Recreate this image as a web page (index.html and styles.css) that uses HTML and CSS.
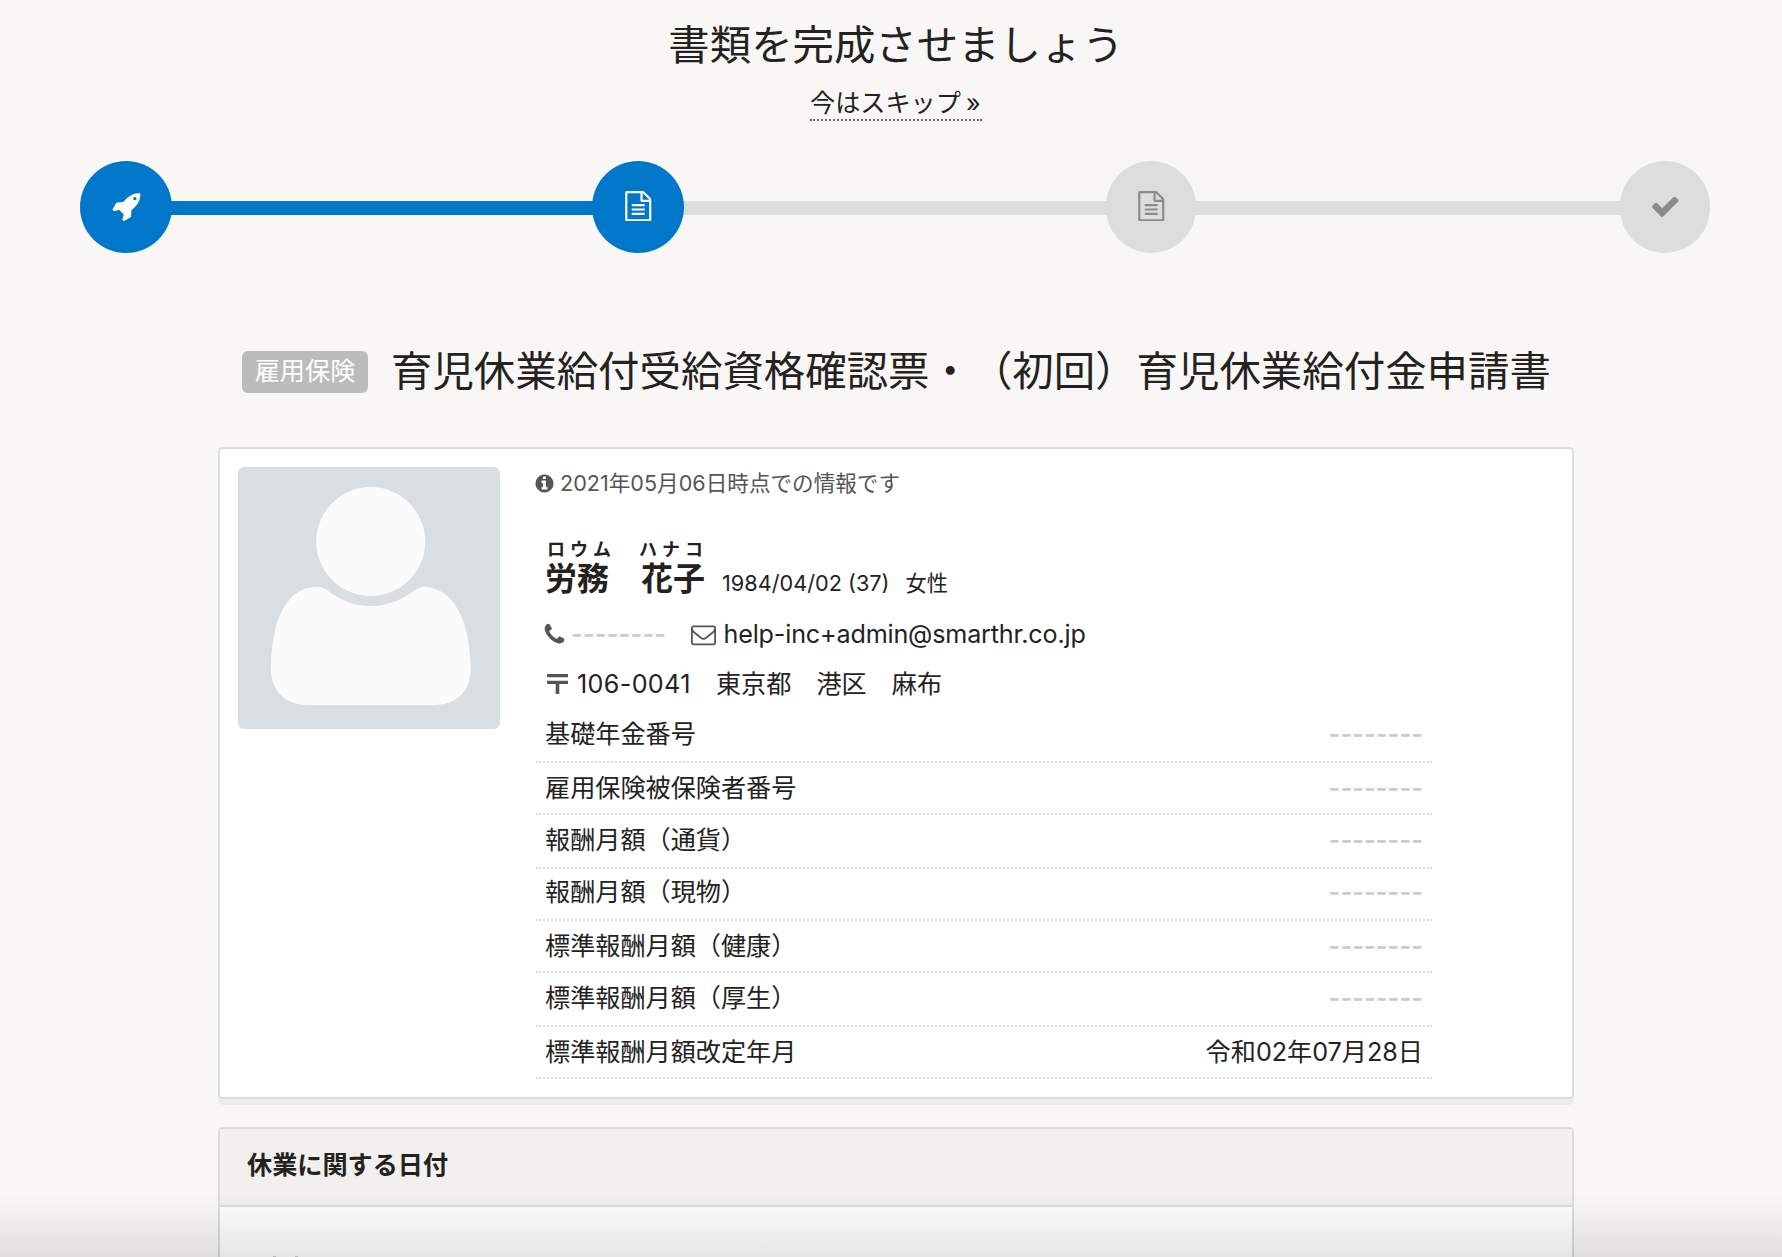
FILE: index.html
```html
<!DOCTYPE html>
<html lang="ja">
<head>
<meta charset="utf-8">
<title>書類を完成させましょう</title>
<link rel="stylesheet" href="styles.css">
</head>
<body>
<svg class="sprite" aria-hidden="true">
<symbol id="file" viewBox="0 0 1792 1792"><path d="M1596 380q28 28 48 76t20 88v1152q0 40-28 68t-68 28h-1344q-40 0-68-28t-28-68v-1600q0-40 28-68t68-28h896q40 0 88 20t76 48zm-444-244v376h376q-10-29-22-41l-313-313q-12-12-41-22zm384 1528v-1024h-416q-40 0-68-28t-28-68v-416h-768v1536h1280zm-1024-864q0-14 9-23t23-9h704q14 0 23 9t9 23v64q0 14-9 23t-23 9h-704q-14 0-23-9t-9-23v-64zm736 224q14 0 23 9t9 23v64q0 14-9 23t-23 9h-704q-14 0-23-9t-9-23v-64q0-14 9-23t23-9h704zm0 256q14 0 23 9t9 23v64q0 14-9 23t-23 9h-704q-14 0-23-9t-9-23v-64q0-14 9-23t23-9h704z"/></symbol>
</svg>
<header class="top">
  <h1 class="title">書類を完成させましょう</h1>
  <a class="skip">今はスキップ <span class="raquo">»</span></a>
</header>
<div class="steps">
  <div class="step done"><svg class="rocket" viewBox="0 0 1792 1792"><path d="M1440 448q0-40-28-68t-68-28-68 28-28 68 28 68 68 28 68-28 28-68zm224-288q0 249-75.5 430.5t-253.5 360.5q-81 80-195 176l-20 379q-2 16-16 26l-384 224q-7 4-16 4-12 0-23-9l-64-64q-13-14-8-32l85-276-281-281-276 85q-3 1-9 1-14 0-23-9l-64-64q-17-19-5-39l224-384q10-14 26-16l379-20q96-114 176-195 188-187 358-258t431-71q14 0 24 9.5t10 22.5z"/></svg></div>
  <div class="bar done"></div>
  <div class="step done"><svg><use href="#file"/></svg></div>
  <div class="bar"></div>
  <div class="step"><svg><use href="#file"/></svg></div>
  <div class="bar last"></div>
  <div class="step"><svg viewBox="0 0 1792 1792"><path d="M1671 566q0 40-28 68l-724 724-136 136q-28 28-68 28t-68-28l-136-136-362-362q-28-28-28-68t28-68l136-136q28-28 68-28t68 28l294 295 656-657q28-28 68-28t68 28l136 136q28 28 28 68z"/></svg></div>
</div>
<div class="heading">
  <span class="badge">雇用保険</span>
  <h2 class="title">育児休業給付受給資格確認票・（初回）育児休業給付金申請書</h2>
</div>
<section class="card profile">
  <svg class="avatar" viewBox="0 0 262 262"><rect width="262" height="262" fill="#d9dee0"/><g fill="#fafbfb"><circle cx="132.7" cy="74.5" r="54.5"/><path d="M33 203C33 150 50 120 79 119.7Q84 119.500 88 122.500C102 133 115 139 132.700 139C150 139 164 133 178 122.500Q182 119.500 187 119.700C215 121 232.700 153 232.700 203C232.700 224 218 238 197 238H69C48 238 33 224 33 203Z"/></g></svg>
  <div class="info">
    <p class="asof"><svg viewBox="0 0 1792 1792"><path d="M1152 1376v-160q0-14-9-23t-23-9h-96v-512q0-14-9-23t-23-9h-320q-14 0-23 9t-9 23v160q0 14 9 23t23 9h96v320h-96q-14 0-23 9t-9 23v160q0 14 9 23t23 9h448q14 0 23-9t9-23zm-128-896v-160q0-14-9-23t-23-9h-192q-14 0-23 9t-9 23v160q0 14 9 23t23 9h192q14 0 23-9t9-23zm640 416q0 209-103 385.5t-279.5 279.5-385.5 103-385.5-103-279.5-279.5-103-385.5 103-385.5 279.5-279.5 385.5-103 385.5 103 279.5 279.5 103 385.500z"/></svg><span>2021年05月06日時点での情報です</span></p>
    <div class="person">
      <div class="name"><span class="kana">ロウム　ハナコ</span><strong>労務　花子</strong></div>
      <span class="birth">1984/04/02 (37)</span><span class="sex">女性</span>
    </div>
    <p class="contact">
      <svg class="phone" viewBox="0 0 1792 1792"><path d="M1600 1240q0 27-10 70.500t-21 68.500q-21 50-122 106-94 51-186 51-27 0-53-3.500t-57.500-12.500-47-14.500-55.500-20.500-49-18q-98-35-175-83-127-79-264-216t-216-264q-48-77-83-175-3-9-18-49t-20.500-55.500-14.500-47-12.500-57.500-3.500-53q0-92 51-186 56-101 106-122 25-11 68.500-21t70.500-10q14 0 21 3 18 6 53 76 11 19 30 54t35 63.500 31 53.500q3 4 17.500 25t21.500 35.500 7 28.500q0 20-28.500 50t-62 55-62 53-28.500 46q0 9 5 22.500t8.500 20.500 14 24 11.500 19q76 137 174 235t235 174q2 1 19 11.500t24 14 20.500 8.500 22.500 5q18 0 46-28.500t53-62 55-62 50-28.500q14 0 28.500 7t35.500 21.500 25 17.500q25 15 53.500 31t63.500 35 54 30q70 35 76 53 3 7 3 21z"/></svg>
      <span class="none">--------</span>
      <svg class="mail" viewBox="0 0 1792 1792"><path d="M1664 1504v-768q-32 36-69 66-268 206-426 338-51 43-83 67t-86.500 48.500-102.500 24.500h-2q-48 0-102.500-24.500t-86.500-48.500-83-67q-158-132-426-338-37-30-69-66v768q0 13 9.500 22.500t22.500 9.500h1472q13 0 22.500-9.500t9.500-22.500zm0-1051v-24.500l-.5-13-3-12.500-5.500-9-9-7.500-14-2.500h-1472q-13 0-22.500 9.500t-9.500 22.500q0 168 147 284 193 152 401 317 6 5 35 29.500t46 37.500 44.500 31.500 50.500 27.500 43 9h2q20 0 43-9t50.500-27.500 44.500-31.500 46-37.500 35-29.500q208-165 401-317 54-43 100.500-115.500t46.500-131.500zm128-37v1088q0 66-47 113t-113 47h-1472q-66 0-113-47t-47-113v-1088q0-66 47-113t113-47h1472q66 0 113 47t47 113z"/></svg>
      <span class="email">help-inc+admin@smarthr.co.jp</span>
    </p>
    <p class="address"><svg class="post" viewBox="0 0 21 20"><path d="M0 0h21v3.300H0zM0 6.700h21V10h-8.700v10H8.700V10H0z"/></svg><span class="zip">106-0041</span><span>　東京都　港区　麻布</span></p>
    <dl class="rows">
      <div class="row"><dt>基礎年金番号</dt><dd class="none">--------</dd></div>
      <div class="row"><dt>雇用保険被保険者番号</dt><dd class="none">--------</dd></div>
      <div class="row tall"><dt>報酬月額（通貨）</dt><dd class="none">--------</dd></div>
      <div class="row"><dt>報酬月額（現物）</dt><dd class="none">--------</dd></div>
      <div class="row"><dt>標準報酬月額（健康）</dt><dd class="none">--------</dd></div>
      <div class="row tall"><dt>標準報酬月額（厚生）</dt><dd class="none">--------</dd></div>
      <div class="row"><dt>標準報酬月額改定年月</dt><dd>令和02年07月28日</dd></div>
    </dl>
  </div>
</section>
<section class="card dates">
  <h3 class="dates-title">休業に関する日付</h3>
  <div class="dates-body"><i></i><i></i></div>
</section>
<div class="fade"></div>
</body>
</html>
```
FILE: styles.css
```css
* { box-sizing: border-box; margin: 0; padding: 0; }
body {
  height: 1257px;
  overflow: hidden;
  position: relative;
  background: #f8f7f5;
  color: #23221e;
  font-family: Inter, "Noto Sans CJK JP", sans-serif;
  font-size: 25.15px;
  line-height: 36px;
  text-spacing-trim: space-all;
}
svg { display: block; flex: none; fill: #555; }
.sprite { display: none; }
.top {
  height: 161px;
  padding: 15px 0 0 10px;
  display: flex;
  flex-direction: column;
  align-items: center;
}
.title { font-size: 41.4px; font-weight: 400; line-height: 60px; white-space: nowrap; }
.skip {
  width: 172px;
  height: 36px;
  margin-top: 10px;
  border-bottom: 2px dotted #666;
  white-space: nowrap;
}
.raquo { margin-left: -2px; }
.steps { display: flex; align-items: center; height: 92px; padding: 0 72px 0 80px; }
.step {
  position: relative;
  flex: none;
  width: 90px;
  height: 92px;
  border-radius: 46px;
  background: #ddd;
  display: flex;
  align-items: center;
  justify-content: center;
}
.step svg { width: 30.5px; height: 30.5px; margin-bottom: 2px; fill: #8b8b8b; }
.step.done { width: 92px; background: #0077c9; }
.step.done svg { fill: #fff; }
.step .rocket { margin-left: 3px; }
.bar { width: 426px; height: 14px; margin: 2px -2px 0; background: #ddd; }
.bar.last { width: 428px; }
.bar.done { width: 424px; background: #0077c9; }
.heading {
  display: flex;
  align-items: center;
  height: 194px;
  padding: 42px 0 0 242px;
  gap: 23px;
}
.heading .title { font-size: 41.43px; }
.badge {
  width: 126px;
  height: 42px;
  margin-top: 2px;
  border-radius: 6px;
  background: #bbb;
  color: #fff;
  line-height: 40px;
  text-align: center;
}
.card {
  width: 1356px;
  margin-left: 218px;
  border: 2px solid #dadbdb;
  border-radius: 5px;
  background: #fff;
}
.profile { height: 652px; padding: 18px; display: flex; gap: 36px; box-shadow: 0 6px 0 rgba(0, 0, 0, .045); }
.avatar { width: 262px; height: 262px; border-radius: 6px; }
.info { width: 896px; }
.asof { display: flex; align-items: center; height: 32px; font-size: 21.6px; color: #555; white-space: nowrap; }
.asof svg { width: 21px; height: 21px; margin: 0 5px 0 -2px; }
.person { display: flex; align-items: flex-end; height: 98px; padding-left: 9px; font-size: 21.2px; white-space: nowrap; }
.name { width: 160px; margin-right: 17px; }
.name strong { display: block; font-size: 32px; line-height: 36px; font-weight: 700; }
.kana { display: block; font-size: 18px; line-height: 22px; font-weight: 600; letter-spacing: 5px; padding-left: 2px; }
.birth, .sex { margin-bottom: -4px; }
.birth { font-size: 21.7px; }
.sex { margin-left: 16px; }
.contact, .address { display: flex; align-items: center; height: 50px; padding-left: 9px; white-space: nowrap; }
.contact { margin-top: 12px; }
.phone { width: 25px; height: 25px; margin-left: -3px; }
.none { color: #ccc; font-weight: 600; letter-spacing: .1px; }
.contact .none { width: 95px; margin: 0 24.5px 0 4px; letter-spacing: .2px; }
.mail { width: 25px; height: 25px; margin-right: 8px; }
.email { letter-spacing: -.17px; }
.zip { letter-spacing: .35px; }
.post { width: 21px; height: 20px; margin: 0 9px 0 2px; }
.rows { padding-top: 2px; }
.row {
  display: flex;
  justify-content: space-between;
  height: 52px;
  padding: 6.5px 9px 0;
  border-bottom: 2px dotted #ddd;
  white-space: nowrap;
}
.row:first-child { padding-top: 5px; }
.row:nth-child(4) { padding-top: 5px; }
.row.tall { height: 54px; }
.dates { height: 140px; margin-top: 28px; overflow: hidden; }
.dates-title {
  height: 78px;
  padding-left: 27px;
  border-bottom: 2px solid #dadbdb;
  background: #f1f0ee;
  font-size: 25.15px;
  line-height: 73px;
}
.dates-body { display: flex; gap: 19px; padding: 49px 0 0 53px; }
.dates-body i { width: 3px; height: 1px; background: #ccc; }
.fade {
  position: absolute;
  left: 0;
  right: 0;
  bottom: 0;
  height: 62px;
  background: linear-gradient(rgba(0, 0, 0, 0), rgba(0, 0, 0, .1));
}
```
